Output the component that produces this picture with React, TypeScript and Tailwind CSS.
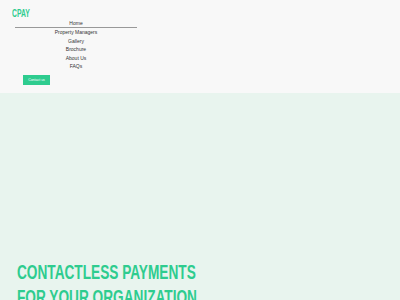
const links = ['Home', 'Property Managers', 'Gallery', 'Brochure', 'About Us', 'FAQs']

export default function App() {
  return (
    <div className="min-h-screen w-[400px] bg-[#e8f4ee] font-['Liberation_Sans',sans-serif] overflow-hidden">
      <header className="bg-[#f8f8f8] h-[93px] text-[0px] leading-none">
        <div className="pl-[12px] pt-[10px] h-[19px]">
          <div className="origin-left scale-x-[0.68] font-bold text-[10px] leading-[8px] text-[#2ecc8f]">
            CPAY
          </div>
        </div>
        <nav className="ml-[15px] w-[122px] flex flex-col text-center text-[5px] leading-[8.6px] text-[#333]">
          {links.map((l, i) => (
            <a key={l} className={i === 0 ? 'block border-b border-[#999] leading-[8px]' : 'block'}>
              {l}
            </a>
          ))}
        </nav>
        <div className="pl-[23px] pt-[4px]">
          <button className="block w-[27px] h-[10px] bg-[#2ecc8f] text-white text-[3.5px] leading-[10px]">
            Contact us
          </button>
        </div>
      </header>
      <main className="pt-[166px] pl-[17px]">
        <h1 className="origin-left scale-x-[0.65] font-bold text-[21px] leading-[25px] text-[#2ecc8f] uppercase whitespace-nowrap">
          Contactless Payments
          <br />
          For Your Organization
        </h1>
      </main>
    </div>
  )
}
